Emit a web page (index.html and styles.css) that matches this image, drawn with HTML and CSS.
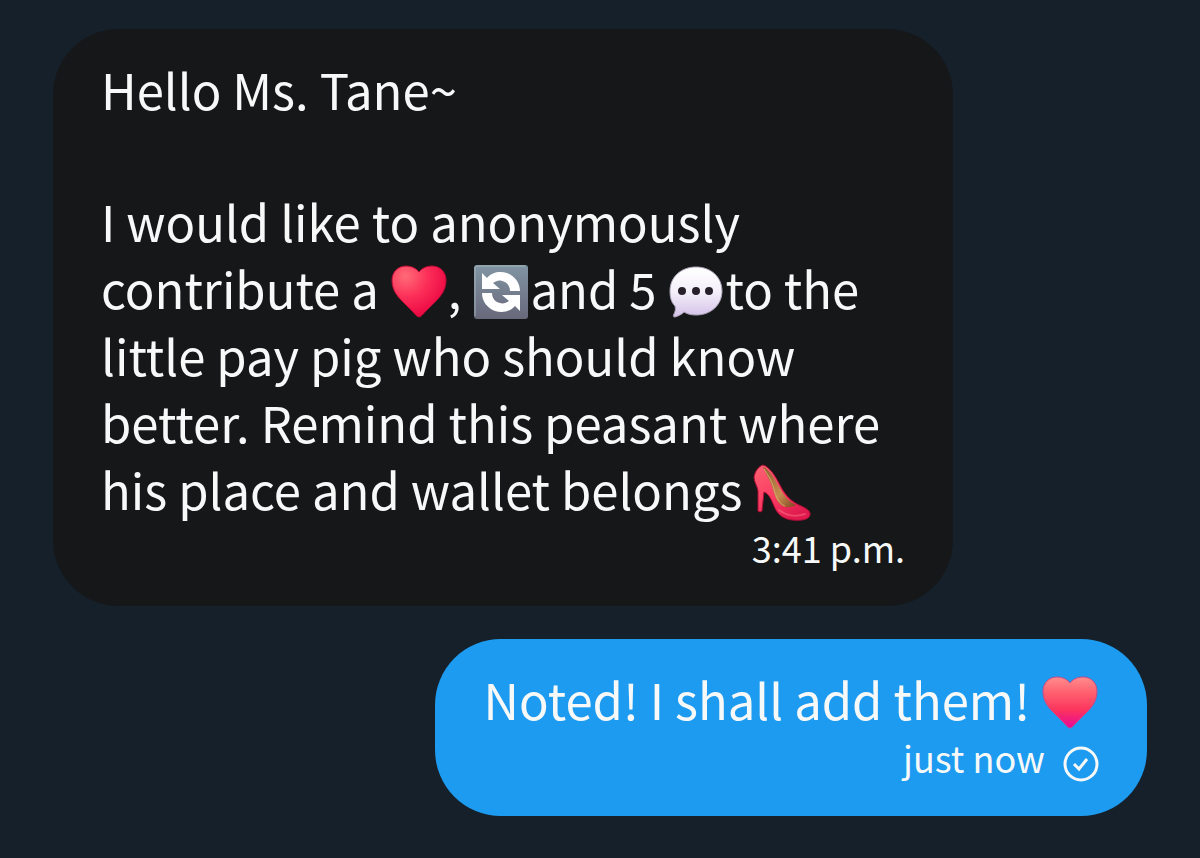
FILE: index.html
```html
<!DOCTYPE html>
<html lang="en">
<head>
  <meta charset="UTF-8">
  <meta name="viewport" content="width=device-width, initial-scale=1.0">
  <title>Messages</title>
  <link rel="stylesheet" href="styles.css">
</head>
<body>
  <main class="chat">
    <div class="bubble received">
      <p>Hello Ms. Tane~</p>
      <p class="next">I would like to anonymously contribute a <svg class="emoji" viewBox="0 0 56 56" role="img" aria-label="red heart">
          <defs>
            <radialGradient id="red" cx="0.25" cy="0.2" r="0.9">
              <stop offset="0" stop-color="#ff6b78"/>
              <stop offset="0.45" stop-color="#fc3059"/>
              <stop offset="1" stop-color="#e8003f"/>
            </radialGradient>
          </defs>
          <path d="M28 53C26 53 24 50 20 46L11 37C4 30 1 24 1 16C1 8 7 2 15 2C21 2 26 5 28 8C30 5 35 2 41 2C49 2 55 8 55 16C55 24 52 30 45 37L36 46C32 50 30 53 28 53Z" fill="url(#red)" stroke="#b80b35" stroke-width="1"/>
        </svg>, <svg class="emoji" viewBox="0 0 56 56" role="img" aria-label="refresh">
          <defs>
            <linearGradient id="steel" x1="0" y1="0" x2="0" y2="1">
              <stop offset="0" stop-color="#8195a3"/>
              <stop offset="1" stop-color="#68687b"/>
            </linearGradient>
          </defs>
          <rect x="1" y="1" width="54" height="54" rx="3" fill="url(#steel)"/>
          <path d="M2 52V4Q2 2 4 2H52" fill="none" stroke="#a3b2bc" stroke-width="1"/>
          <path d="M9 9L14 14C19 8 27 7 34 9C42 12 47 19 47 27H37C37 22 34 18 29 17C26 16 23 17 20 19L27 25H9Z" fill="#fff"/>
          <path d="M47 47L42 42C37 48 29 49 22 47C14 44 9 37 9 29H19C19 34 22 38 27 39C30 40 33 39 36 37L29 31H47Z" fill="#fff"/>
        </svg>and 5 <svg class="emoji" viewBox="0 0 56 56" role="img" aria-label="speech balloon">
          <defs>
            <linearGradient id="pearl" x1="0" y1="0" x2="0" y2="1">
              <stop offset="0" stop-color="#fff"/>
              <stop offset="0.5" stop-color="#f4effa"/>
              <stop offset="1" stop-color="#d3c1e8"/>
            </linearGradient>
          </defs>
          <path d="M28 3C43 3 54 13 54 27C54 41 43 51 28 51C23 51 19 50 16 48C13 51 10 52 7 53C5 53 5 52 6 50C7 48 8 45 7 42C3 38 2 33 2 27C2 13 13 3 28 3Z" fill="url(#pearl)" stroke="#aaa2b4" stroke-width="1"/>
          <g fill="#27202b">
            <circle cx="14" cy="27" r="4"/>
            <circle cx="28" cy="27" r="4"/>
            <circle cx="41" cy="27" r="4"/>
          </g>
        </svg>to the little pay pig who should know better. Remind this peasant where his place and wallet belongs <svg class="emoji" viewBox="0 0 56 56" role="img" aria-label="high-heeled shoe">
          <defs>
            <linearGradient id="shoe" x1="0" y1="0" x2="0.6" y2="1">
              <stop offset="0" stop-color="#ff6272"/>
              <stop offset="0.6" stop-color="#fa3a62"/>
              <stop offset="1" stop-color="#e01a4e"/>
            </linearGradient>
            <linearGradient id="sole" x1="0" y1="0" x2="1" y2="1">
              <stop offset="0" stop-color="#8f5b32"/>
              <stop offset="0.6" stop-color="#c58d50"/>
              <stop offset="1" stop-color="#80431f"/>
            </linearGradient>
          </defs>
          <path d="M9 0C5 1 1 6 0 12C0 17 3 20 4 26L4 46Q6 48 8 46L10 27C15 29 17 34 20 41C23 49 29 54 38 55C46 56 55 55 56 50C57 46 52 43 45 40C37 36 32 31 27 22C22 12 16 2 9 0Z" fill="url(#shoe)" stroke="#a80c33" stroke-width="1"/>
          <path d="M9 2C15 4 20 13 25 22C30 31 35 37 42 40C37 43 30 43 26 39C21 34 20 27 17 19C14 12 11 7 9 2Z" fill="url(#sole)"/>
          <path d="M10 4C14 10 18 16 20 24C22 32 25 39 31 41" fill="none" stroke="#d9a267" stroke-width="1"/>
          <path d="M25 45C33 51 42 52 51 49" fill="none" stroke="#ff8794" stroke-width="2" stroke-linecap="round" opacity="0.4"/>
        </svg></p>
      <div class="meta"><time>3:41 p.m.</time></div>
    </div>

    <div class="bubble sent">
      <p>Noted! I shall add them! <svg class="emoji" viewBox="0 0 56 56" role="img" aria-label="heart">
          <defs>
            <linearGradient id="pink" x1="0" y1="0" x2="0" y2="1">
              <stop offset="0" stop-color="#ff8c8d"/>
              <stop offset="0.3" stop-color="#ff6170"/>
              <stop offset="0.65" stop-color="#fc345d"/>
              <stop offset="1" stop-color="#e8089b"/>
            </linearGradient>
          </defs>
          <path d="M28 53C26 53 24 50 20 46L11 37C4 30 1 24 1 16C1 8 7 2 15 2C21 2 26 5 28 8C30 5 35 2 41 2C49 2 55 8 55 16C55 24 52 30 45 37L36 46C32 50 30 53 28 53Z" fill="url(#pink)" stroke="#c44b87" stroke-width="1"/>
        </svg></p>
      <div class="meta">
        <time>just now</time>
        <svg class="check" viewBox="0 0 36 36" role="img" aria-label="Sent">
          <circle cx="18" cy="18" r="16"/>
          <path d="M11 18L16 23L24 13"/>
        </svg>
      </div>
    </div>
  </main>
</body>
</html>
```

FILE: styles.css
```css
* {
  box-sizing: border-box;
}
body {
  margin: 0;
  background-color: #16202a;
  color: #f7f9f9;
  font-family: "Noto Sans CJK SC", "Noto Sans", sans-serif;
  font-size: 49px;
  line-height: 67px;
}
.chat {
  display: flex;
  flex-direction: column;
  gap: 33px;
  padding: 29px 53px;
}
.bubble {
  max-width: 900px;
  padding: 26px 48px 34px;
  border-radius: 66px;
}
.received {
  align-self: flex-start;
  background-color: #151719;
}
.sent {
  align-self: flex-end;
  background-color: #1d9bf0;
}
p {
  margin: 0;
}
.next {
  margin-top: 65px;
}
.emoji {
  width: 56px;
  height: 56px;
  margin: 0 1px;
  vertical-align: -11px;
  overflow: visible;
}
.meta {
  display: flex;
  justify-content: flex-end;
  align-items: flex-end;
  gap: 18px;
  font-size: 36px;
  line-height: 50px;
}
.check {
  width: 36px;
  height: 36px;
  fill: none;
  stroke: #f7f9f9;
  stroke-width: 3;
}
```
